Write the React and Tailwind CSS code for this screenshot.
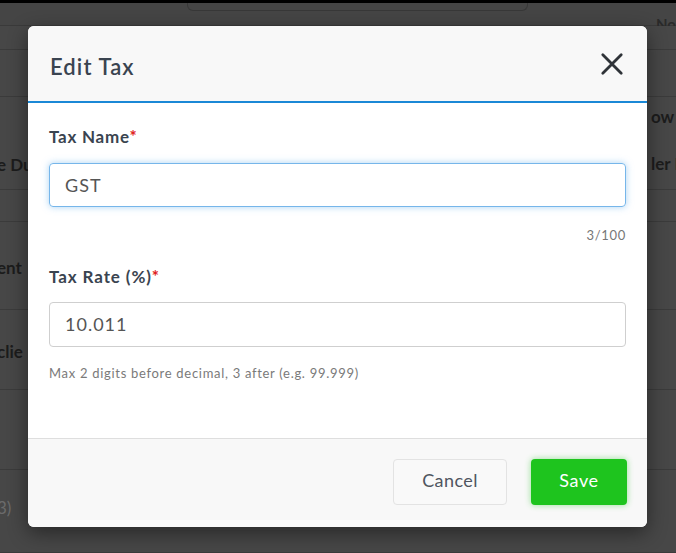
import React from "react";

const rows = [
    {h: "h-[24px]", left: ""},
    {h: "h-[47px]", left: ""},
    {h: "h-[93px]", left: "e Du", right: "ow c", right2: "ler I", leftPad: "pt-[58px]"},
    {h: "h-[32px]", left: ""},
    {h: "h-[88px]", left: "ent", leftPad: "pt-[36px]"},
    {h: "h-[80px]", left: "clie", leftPad: "pt-[32px]"},
    {h: "h-[80px]", left: ""},
    {h: "h-[83px]", left: "3)", leftPad: "pt-[28px]", light: true},
];

const Backdrop = () => (
    <div className="flex flex-col">
        <div className="h-[3px] bg-black"/>
        <div className="h-[23px] bg-[#454545] flex border-b border-[#3a3a3a]">
            <div className="w-[341px] h-[8px] ml-[187px] rounded-b-md border border-t-0 border-[#383838]"/>
            <div className="ml-auto text-[#2a2a2a] font-bold text-[15px] pt-[10px]">No</div>
        </div>
        {rows.map((r, i) => (
            <div key={i} className={`${r.h} bg-[#474747] border-b border-[#3b3b3b] flex justify-between`}>
                <div className={`${r.leftPad || ""} -ml-[3px] text-[17px] leading-5 ${r.light ? "text-[#6b6b6b] font-normal" : "text-[#1c1c1c] font-bold"}`}>
                    {r.left}
                </div>
                {r.right && (
                    <div className="flex flex-col text-[17px] leading-5 font-bold text-[#1c1c1c] w-[25px] overflow-hidden whitespace-nowrap">
                        <span className="mt-[10px]">{r.right}</span>
                        <span className="mt-[27px]">{r.right2}</span>
                    </div>
                )}
            </div>
        ))}
    </div>
);

const App = () => {
    return (
        <div className="relative h-[553px] w-[676px] overflow-hidden bg-[#474747]"
             style={{fontFamily: "Lato, 'Noto Sans', sans-serif"}}>
            <Backdrop/>

            <div className="absolute left-[28px] top-[26px] w-[619px] h-[501px] rounded-md overflow-hidden bg-white shadow-[0_6px_20px_rgba(0,0,0,0.45)] flex flex-col">
                <div className="h-[77px] bg-[#f8f8f8] flex items-center justify-between pl-[22px] pr-[22px] border-b-2 border-[#1a88d6]">
                    <h2 className="mt-[6px] text-[22px] font-semibold text-[#3a4450] tracking-[1.1px]">Edit Tax</h2>
                    <button aria-label="Close" className="text-[#2f3338]">
                        <svg width="26" height="26" viewBox="0 0 24 24" fill="none" stroke="currentColor"
                             strokeWidth="2.6" strokeLinecap="round">
                            <path d="M3.5 3.5L20.5 20.5M20.5 3.5L3.5 20.5"/>
                        </svg>
                    </button>
                </div>

                <div className="flex-1 px-[21px] pt-[24px]">
                    <label className="block text-[17px] leading-[20px] font-bold text-[#3a4450] tracking-[0.75px]">
                        Tax Name<span className="text-[#e02020]">*</span>
                    </label>
                    <div className="mt-[16px] h-[44px] rounded border border-[#76b6ea] shadow-[0_0_7px_rgba(102,175,233,0.55)] flex items-center px-[15px] text-[18px] text-[#555] tracking-[1px]">
                        GST
                    </div>
                    <div className="mt-[21px] text-right text-[13px] leading-[15px] text-[#777] tracking-[0.7px]">3/100</div>

                    <label className="block mt-[24px] text-[17px] leading-[20px] font-bold text-[#3a4450] tracking-[0.9px]">
                        Tax Rate (%)<span className="text-[#e02020]">*</span>
                    </label>
                    <div className="mt-[15px] h-[45px] rounded border border-[#cfcfcf] flex items-center px-[15px] text-[18px] text-[#555] tracking-[1px]">
                        10.011
                    </div>
                    <p className="mt-[19px] text-[13px] leading-[15px] text-[#7a7a7a] tracking-[0.7px]">
                        Max 2 digits before decimal, 3 after (e.g. 99.999)
                    </p>
                </div>

                <div className="h-[89px] bg-[#f8f8f8] border-t border-[#dedede] flex items-start justify-end gap-[24px] pt-[20px] pr-[20px]">
                    <button className="w-[114px] h-[46px] rounded border border-[#e3e3e3] bg-[#f9f9f9] text-[18px] leading-[20px] text-[#4f5560] tracking-[0.4px] flex items-center justify-center pb-[4px]">
                        Cancel
                    </button>
                    <button className="w-[96px] h-[46px] rounded bg-[#1ec41e] text-[18px] leading-[20px] text-white tracking-[0.6px] flex items-center justify-center pb-[4px] shadow-[0_0_6px_rgba(30,196,30,0.45)]">
                        Save
                    </button>
                </div>
            </div>
        </div>
    );
};

export default App;
